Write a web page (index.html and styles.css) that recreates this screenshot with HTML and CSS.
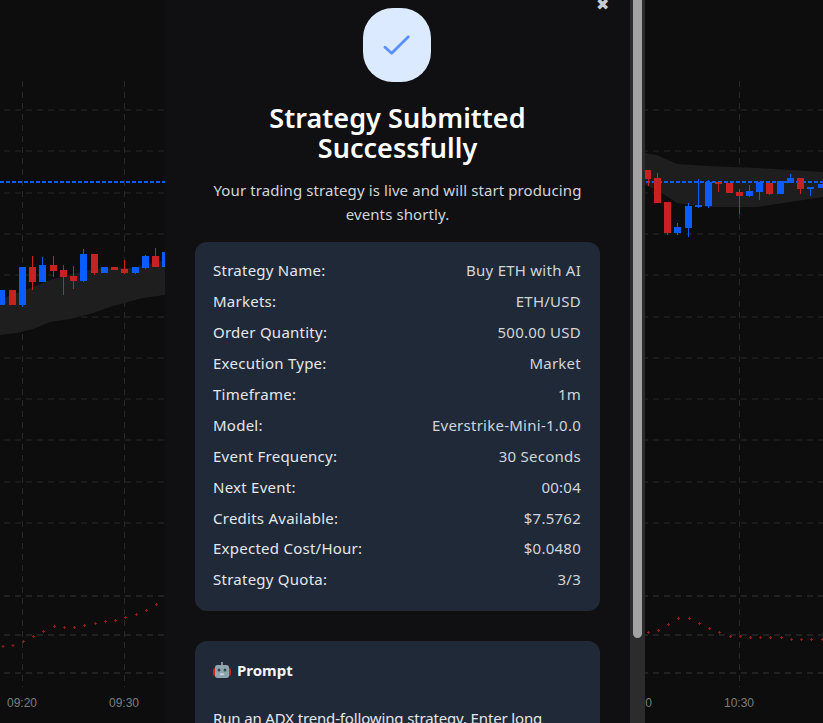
FILE: index.html
```html
<!DOCTYPE html>
<html lang="en">
<head>
    <meta charset="UTF-8">
    <meta name="viewport" content="width=device-width, initial-scale=1.0">
    <title>Strategy Submitted</title>
    <link rel="stylesheet" href="styles.css">
</head>
<body>
    <!-- Price chart behind the modal -->
    <svg class="chart" width="823" height="723" viewBox="0 0 823 723">
        <path class="grid" d="M4 110H823M4 151H823M4 193H823M4 234H823M4 275H823M4 317H823M4 358H823M4 399H823M4 440H823M4 482H823M4 523H823"/>
        <path class="grid-low" d="M4 596H823M4 635H823M4 673H823"/>
        <path class="grid" d="M22.500 81V687M124.500 81V687M739.500 81V687"/>

        <path class="band" d="M0 299L33 287L50 280L80 272L100 268L133 268L165 260V295L143 298L113 306L93 313L70 319L50 322L33 329L17 333L0 335Z"/>
        <path class="band" d="M645 153L657 155L677 164L707 166L757 168L823 172V197L790 202L757 207L707 207L677 203L657 190L645 185Z"/>

        <path class="price-line" d="M0 182H165M646 182H823"/>

        <!-- wicks -->
        <path class="wick-red" d="M32.500 256V290M53.500 256V277M63.500 265V295M73.500 266V289M94.500 254V275M124.500 260V274M155.500 248V256M648.500 179V186M657.500 173V178M667.500 233V235M718.500 184V192M739.500 189V214M769.500 194V195M800.500 189V194"/>
        <path class="wick-blue" d="M22.500 305V307M42.500 257V265M83.500 249V282M135.500 273V274M145.500 255V269M677.500 223V235M688.500 203V237M698.500 179V208M708.500 180V208M749.500 185V197M759.500 192V200M790.500 174V178M810.500 189V196"/>

        <!-- bodies -->
        <path class="body-red" d="M9 290h7v15h-7zM29 267h7v15h-7zM50 265h7v6h-7zM60 270h7v7h-7zM70 276h7v5h-7zM91 254h7v19h-7zM111 267h7v3h-7zM121 269h7v4h-7zM152 256h7v11h-7zM645 170h6v9h-6zM654 178h7v25h-7zM664 202h7v31h-7zM715 182h7v2h-7zM726 183h7v10h-7zM736 192h7v4h-7zM766 183h7v11h-7zM797 178h7v11h-7z"/>
        <path class="body-blue" d="M0 290h5v15h-5zM19 267h7v38h-7zM39 265h7v17h-7zM80 254h7v27h-7zM101 267h7v6h-7zM132 267h7v6h-7zM142 256h7v12h-7zM162 252h3v15h-3zM674 227h7v6h-7zM685 206h7v22h-7zM695 205h7v2h-7zM705 182h7v24h-7zM746 191h7v5h-7zM756 182h7v10h-7zM777 181h7v13h-7zM787 178h7v5h-7zM807 187h7v2h-7zM818 184h5v4h-5z"/>

        <!-- indicator dots -->
        <path class="dots" d="M1.500 646.500h3M11.500 645.500h3M22 641.500h3M32 636.500h3M42 631.500h3M53 626.500h3M63 627.500h3M73 627.500h3M83 625.500h3M94 623.500h3M104 621.500h3M114 620.500h3M124 617.500h3M135 614.500h3M145 610.500h3M155 604.500h3M647 632.500h3M657 630.500h3M667 624.500h3M677 618.500h3M688 618.500h3M698 623.500h3M708 628.500h3M718 632.500h3M729 636.500h3M739 636.500h3M749 637.500h3M759 637.500h3M769 637.500h3M780 637.500h3M790 639.500h3M800 639.500h3M810 639.500h3M821 639.500h3"/>
        <path class="dots" d="M3 645v3M13 644v3M23.500 640v3M33.500 635v3M43.500 630v3M54.500 625v3M64.500 626v3M74.500 626v3M84.500 624v3M95.500 622v3M105.500 620v3M115.500 619v3M125.500 616v3M136.500 613v3M146.500 609v3M156.500 603v3M648.500 631v3M658.500 629v3M668.500 623v3M678.500 617v3M689.500 617v3M699.500 622v3M709.500 627v3M719.500 631v3M730.500 635v3M740.500 635v3M750.500 636v3M760.500 636v3M770.500 636v3M781.500 636v3M791.500 638v3M801.500 638v3M811.500 638v3M822.500 638v3"/>

        <text class="axis" x="22" y="707">09:20</text>
        <text class="axis" x="124" y="707">09:30</text>
        <text class="axis" x="637" y="707">10:20</text>
        <text class="axis" x="739" y="707">10:30</text>
    </svg>

    <div class="modal">
        <div class="modal-content">
            <span class="close-btn">&#10006;</span>

            <div class="success-icon">
                <svg width="28" height="28" viewBox="0 0 28 28">
                    <path d="M2 16.300L8.700 22.300L25.300 5.700"/>
                </svg>
            </div>

            <h2>Strategy Submitted Successfully</h2>
            <p class="subtitle">Your trading strategy is live and will start producing events shortly.</p>

            <div class="panel details">
                <div class="row"><span>Strategy Name:</span><span class="value">Buy ETH with AI</span></div>
                <div class="row"><span>Markets:</span><span class="value">ETH/USD</span></div>
                <div class="row"><span>Order Quantity:</span><span class="value">500.00 USD</span></div>
                <div class="row"><span>Execution Type:</span><span class="value">Market</span></div>
                <div class="row"><span>Timeframe:</span><span class="value">1m</span></div>
                <div class="row"><span>Model:</span><span class="value">Everstrike-Mini-1.0.0</span></div>
                <div class="row"><span>Event Frequency:</span><span class="value">30 Seconds</span></div>
                <div class="row"><span>Next Event:</span><span class="value">00:04</span></div>
                <div class="row"><span>Credits Available:</span><span class="value">$7.5762</span></div>
                <div class="row"><span>Expected Cost/Hour:</span><span class="value">$0.0480</span></div>
                <div class="row"><span>Strategy Quota:</span><span class="value">3/3</span></div>
            </div>

            <div class="panel prompt">
                <h3>
                    <svg width="18" height="18" viewBox="0 0 18 18">
                        <rect class="robot-ear" x="0" y="7" width="18" height="8" rx="2"/>
                        <rect class="robot-stem" x="8" y="1" width="2" height="4"/>
                        <rect class="robot-head" x="2" y="4" width="14" height="13" rx="2.500"/>
                        <circle class="robot-eye" cx="6" cy="9" r="1.500"/>
                        <circle class="robot-eye" cx="12" cy="9" r="1.500"/>
                        <rect class="robot-mouth" x="7" y="12.500" width="4" height="1.500"/>
                    </svg>
                    Prompt
                </h3>
                <p>Run an ADX trend-following strategy. Enter long</p>
            </div>
        </div>

        <!-- Scrollbar -->
        <div class="scroll-track">
            <div class="scroll-thumb"></div>
        </div>
    </div>
</body>
</html>
```

FILE: styles.css
```css
/* General Styling */
* {
    margin: 0;
    padding: 0;
    box-sizing: border-box;
}

body {
    font-family: 'Noto Sans', 'Open Sans', sans-serif;
    background-color: #0d0d0e;
    color: #fff;
    height: 100vh;
    overflow: hidden;
}

/* Chart */
.chart {
    position: absolute;
    top: 0;
    left: 0;
    fill: none;
}

.grid {
    stroke: #282828;
    stroke-dasharray: 6 5;
}

.grid-low {
    stroke: #363636;
    stroke-dasharray: 6 5;
}

.band {
    fill: #1e1e1e;
}

.price-line {
    stroke: #0a5cff;
    stroke-width: 2;
    stroke-dasharray: 4 2;
}

.wick-red {
    stroke: #c62222;
}

.wick-blue {
    stroke: #0a5cff;
}

.body-red {
    fill: #c62222;
}

.body-blue {
    fill: #0a5cff;
}

.dots {
    stroke: #8f1c1c;
}

.axis {
    fill: #7d7d7d;
    font-family: 'Liberation Sans', sans-serif;
    font-size: 12px;
    text-anchor: middle;
}

/* Modal */
.modal {
    position: relative;
    display: flex;
    width: 480px;
    height: 100vh;
    margin-left: 165px;
    background-color: #101013;
}

.modal-content {
    position: relative;
    flex: 1;
    padding: 8px 30px 0;
    overflow: hidden;
    text-align: center;
}

.close-btn {
    position: absolute;
    top: -5px;
    right: 21px;
    font-size: 16px;
    line-height: 18px;
    color: #c8ccd2;
}

.success-icon {
    display: flex;
    justify-content: center;
    align-items: center;
    width: 68px;
    height: 74px;
    margin: 0 0 21px 168px;
    border-radius: 30px;
    background-color: #dbeafe;
}

.success-icon path {
    fill: none;
    stroke: #5b8ff9;
    stroke-width: 2.800;
    stroke-linecap: round;
    stroke-linejoin: round;
}

h2 {
    font-size: 27px;
    line-height: 30px;
    font-weight: 600;
    letter-spacing: 0.05px;
    padding: 0 60px;
    margin-bottom: 15px;
}

.subtitle {
    font-size: 15px;
    line-height: 24px;
    letter-spacing: 0.1px;
    color: #d1d5db;
    margin-bottom: 16px;
}

.panel {
    background-color: #1f2937;
    border-radius: 12px;
    padding: 13px 19px 16px 18px;
    text-align: left;
}

.details {
    margin-bottom: 30px;
}

.row {
    display: flex;
    justify-content: space-between;
    align-items: center;
    height: 30.900px;
    font-size: 15px;
    letter-spacing: 0.25px;
    color: #e5e7eb;
}

.value {
    color: #d1d5db;
}

.prompt {
    padding-top: 17px;
}

h3 {
    display: flex;
    align-items: center;
    gap: 6px;
    font-size: 15px;
    line-height: 24px;
    font-weight: 700;
    color: #f3f4f6;
    margin-bottom: 24px;
}

.prompt p {
    font-size: 15px;
    line-height: 24px;
    letter-spacing: -0.15px;
    color: #e5e7eb;
}

.robot-ear {
    fill: #c62828;
}

.robot-stem {
    fill: #78909c;
}

.robot-head {
    fill: #90a4ae;
}

.robot-eye {
    fill: #37474f;
}

.robot-mouth {
    fill: #cfd8dc;
}

/* Scrollbar */
.scroll-track {
    width: 15px;
    background-color: #2c2c2c;
}

.scroll-thumb {
    width: 9px;
    height: 638px;
    margin-left: 3px;
    border-radius: 0 0 5px 5px;
    background-color: #a3a3a3;
}
```
